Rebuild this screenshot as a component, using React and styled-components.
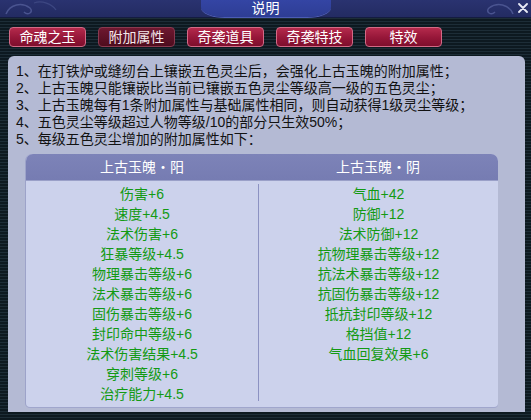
import React from 'react';
import styled, { createGlobalStyle } from 'styled-components';

const GlobalStyle = createGlobalStyle`
  html, body {
    margin: 0;
    padding: 0;
    background: #0e1a22;
  }
`;

const tabs = ['命魂之玉', '附加属性', '奇袭道具', '奇袭特技', '特效'];

const notes = [
  '1、在打铁炉或缝纫台上镶嵌五色灵尘后，会强化上古玉魄的附加属性；',
  '2、上古玉魄只能镶嵌比当前已镶嵌五色灵尘等级高一级的五色灵尘；',
  '3、上古玉魄每有1条附加属性与基础属性相同，则自动获得1级灵尘等级；',
  '4、五色灵尘等级超过人物等级/10的部分只生效50%；',
  '5、每级五色灵尘增加的附加属性如下：',
];

const yang = [
  '伤害+6',
  '速度+4.5',
  '法术伤害+6',
  '狂暴等级+4.5',
  '物理暴击等级+6',
  '法术暴击等级+6',
  '固伤暴击等级+6',
  '封印命中等级+6',
  '法术伤害结果+4.5',
  '穿刺等级+6',
  '治疗能力+4.5',
];

const yin = [
  '气血+42',
  '防御+12',
  '法术防御+12',
  '抗物理暴击等级+12',
  '抗法术暴击等级+12',
  '抗固伤暴击等级+12',
  '抵抗封印等级+12',
  '格挡值+12',
  '气血回复效果+6',
];

const App = () => {
  return (
    <>
      <GlobalStyle />
      <Window>
        <TitleBar>
          <Cloud viewBox="0 0 60 17" $side="left">
            <path d="M2 14 C6 4 18 2 26 8 C30 12 24 16 20 12" fill="none" stroke="#4a5490" strokeWidth="1.5" />
            <path d="M30 3 C38 0 48 4 52 10" fill="none" stroke="#3d4782" strokeWidth="1.2" />
          </Cloud>
          <TitleTab>说明</TitleTab>
          <Cloud viewBox="0 0 60 17" $side="right">
            <path d="M58 14 C54 4 42 2 34 8 C30 12 36 16 40 12" fill="none" stroke="#4a5490" strokeWidth="1.5" />
          </Cloud>
          <Close>
            <svg viewBox="0 0 10 10" width="10" height="10">
              <path d="M1 1 L9 9 M9 1 L1 9" stroke="#e8eaf6" strokeWidth="1.8" strokeLinecap="round" />
            </svg>
          </Close>
        </TitleBar>
        <TabRow>
          {tabs.map((t) => (
            <TabButton key={t} $active={t === '附加属性'}>
              {t}
            </TabButton>
          ))}
        </TabRow>
        <Panel>
          <Notes>
            {notes.map((n) => (
              <Note key={n}>{n}</Note>
            ))}
          </Notes>
          <Table>
            <HeadRow>
              <HeadCell>上古玉魄・阳</HeadCell>
              <HeadCell>上古玉魄・阴</HeadCell>
            </HeadRow>
            <TableBody>
              <Column>
                {yang.map((v) => (
                  <Attr key={v}>{v}</Attr>
                ))}
              </Column>
              <Column $divider>
                {yin.map((v) => (
                  <Attr key={v}>{v}</Attr>
                ))}
              </Column>
            </TableBody>
          </Table>
        </Panel>
      </Window>
    </>
  );
};

export default App;

const Window = styled.div`
  width: 531px;
  height: 420px;
  display: flex;
  flex-direction: column;
  overflow: hidden;
  background: repeating-linear-gradient(to bottom, #1d2d37 0px, #1d2d37 1px, #0d1920 1px, #0d1920 3px);
  font-family: 'Liberation Sans', 'Noto Sans CJK SC', sans-serif;
  font-size: 14px;
`;

const TitleBar = styled.div`
  position: relative;
  height: 17px;
  display: flex;
  justify-content: center;
  background: linear-gradient(180deg, #2a3370 0%, #232b62 100%);
  border-bottom: 1px solid #141c40;
`;

const Cloud = styled.svg`
  position: absolute;
  top: 0;
  ${(p) => (p.$side === 'left' ? 'left: 4px;' : 'right: 16px;')}
  width: 60px;
  height: 17px;
`;

const TitleTab = styled.div`
  width: 130px;
  height: 17px;
  line-height: 17px;
  text-align: center;
  color: #ffffff;
  font-size: 14px;
  background: linear-gradient(180deg, #3445a4 0%, #2e3d94 100%);
  border-radius: 0 0 24px 24px / 0 0 10px 10px;
  box-shadow: 0 1px 0 #4c5cb4;
`;

const Close = styled.div`
  position: absolute;
  right: 3px;
  top: 3px;
  width: 10px;
  height: 10px;
  display: flex;
`;

const TabRow = styled.div`
  display: flex;
  gap: 12px;
  padding: 9px 0 0 9px;
  height: 20px;
`;

const TabButton = styled.div`
  width: 75px;
  height: 18px;
  line-height: 18px;
  text-align: center;
  color: ${(p) => (p.$active ? '#f4e6ea' : '#ffffff')};
  font-size: 14px;
  border-radius: 4px;
  border: 1px solid ${(p) => (p.$active ? '#8a3a50' : '#d36a86')};
  background: ${(p) =>
    p.$active
      ? 'linear-gradient(180deg, #6e1830 0%, #4e0c1e 100%)'
      : 'linear-gradient(180deg, #b42a4c 0%, #951638 55%, #7e0e2c 100%)'};
`;

const Panel = styled.div`
  margin: 9px 6px 0 8px;
  height: 356px;
  box-sizing: border-box;
  border-radius: 6px 6px 0 0;
  background: #b4bad4;
  padding: 7px 0 0 0;
  display: flex;
  flex-direction: column;
`;

const Notes = styled.div`
  padding-left: 8px;
  display: flex;
  flex-direction: column;
`;

const Note = styled.div`
  color: #121212;
  line-height: 17px;
  white-space: nowrap;
`;

const Table = styled.div`
  margin: 6px 0 0 18px;
  width: 472px;
  height: 253px;
  display: flex;
  flex-direction: column;
  background: #ccd2ec;
  border-radius: 7px 7px 4px 4px;
  box-shadow: -1px 0 0 #9da3c9, 0 1px 0 #a0a6cc;
  overflow: hidden;
`;

const HeadRow = styled.div`
  display: grid;
  grid-template-columns: 232px 1fr;
  height: 26px;
  background: linear-gradient(180deg, #7d83b8 0%, #767cb2 100%);
  border-bottom: 1px solid #9aa0c8;
`;

const HeadCell = styled.div`
  color: #ffffff;
  text-align: center;
  line-height: 26px;
`;

const TableBody = styled.div`
  display: grid;
  grid-template-columns: 232px 1fr;
  padding-top: 3px;
`;

const Column = styled.div`
  display: flex;
  flex-direction: column;
  align-items: center;
  height: 217px;
  border-left: ${(p) => (p.$divider ? '1px solid #8c92c2' : 'none')};
`;

const Attr = styled.div`
  color: #139a13;
  line-height: 20px;
  white-space: nowrap;
`;
